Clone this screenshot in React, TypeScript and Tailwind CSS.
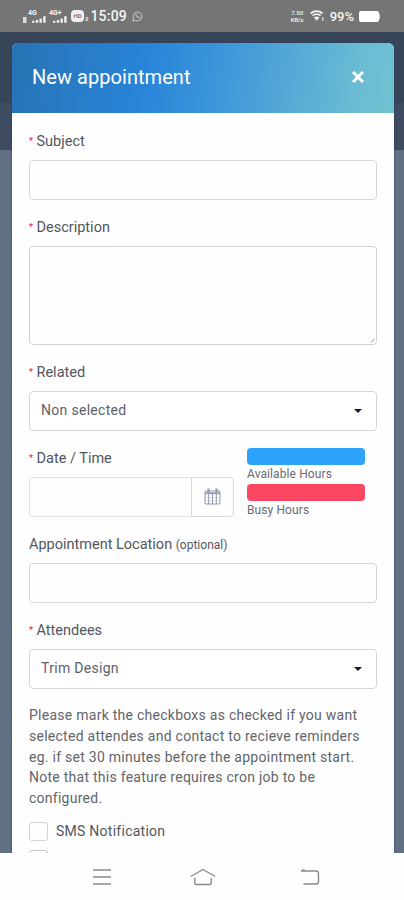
import React from 'react';

type LabelProps = {
  children: React.ReactNode;
  required?: boolean;
};

const Label: React.FC<LabelProps> = ({ children, required = true }) => (
  <div className="flex h-[19px] items-center text-[14.5px] leading-[19px] text-[#52565d]">
    {required && <span className="w-[7.5px] text-[9px] font-medium text-[#f0284a]">*</span>}
    <span>{children}</span>
  </div>
);

const SelectBox: React.FC<{ value: string }> = ({ value }) => (
  <button
    type="button"
    className="flex h-10 w-full items-center justify-between rounded border border-[#d3d7da] bg-white pr-3.5 pb-px pl-[11px] text-[14px] text-[#5b616a]"
  >
    <span className="tracking-[0.3px]">{value}</span>
    <span className="h-0 w-0 border-x-[4.5px] border-t-[4.5px] border-x-transparent border-t-[#10193a]" />
  </button>
);

const SignalBars = () => (
  <svg width="14" height="7" viewBox="0 0 15 7" fill="#eee">
    <rect x="0" y="5" width="2.6" height="2" />
    <rect x="4" y="4" width="2.6" height="3" />
    <rect x="8" y="2.5" width="2.6" height="4.5" />
    <rect x="12" y="0" width="2.6" height="7" />
  </svg>
);

const Signal: React.FC<{ network: string; className: string }> = ({ network, className }) => (
  <div className={`relative h-[13px] w-[18px] ${className}`}>
    <span className="absolute top-0 left-0 text-[7px] leading-[7px] font-bold">{network}</span>
    <span className="absolute right-0 bottom-0">
      <SignalBars />
    </span>
  </div>
);

const StatusBar = () => (
  <header className="flex h-8 items-center justify-between bg-[#757575] pr-6 pl-[22px] text-[#f4f4f4]">
    <div className="flex items-center">
      <svg width="5" height="7" viewBox="0 0 5 7" className="mt-1.5">
        <rect x="1" y="1" width="3.5" height="6" fill="#ddd" />
      </svg>
      <Signal network="4G" className="ml-px" />
      <Signal network="4G+" className="ml-[3px]" />
      <div className="ml-[4px] flex h-3 w-[13px] items-center justify-center rounded-[4px] bg-[#f0f0f0] text-[6px] leading-none font-bold text-[#777]">
        HD
      </div>
      <span className="mt-1.5 ml-px text-[6px] leading-none font-bold">2</span>
      <span className="ml-0.5 text-[14px] leading-none font-medium tracking-[0.2px]">15:09</span>
      <svg width="11" height="11" viewBox="0 0 12 12" fill="none" stroke="#d2d2d2" className="ml-[5px]">
        <path d="M1 11l.8-2.700A4.800 4.800 0 1 1 3.700 10.200z" strokeWidth="1" />
        <path d="M4 3.800c0 2.200 1.900 4.200 4.100 4.200l.6-1-1.400-.7-.6.6C5.900 6.500 5.500 6 5.200 5.300l.5-.6-.6-1.300z" strokeWidth=".7" />
      </svg>
    </div>
    <div className="flex items-center">
      <div className="w-[15px] text-center text-[6px] leading-[7px] font-medium">
        <div className="h-[7px]">7.50</div>
        <div className="h-[7px]">KB/s</div>
      </div>
      <svg width="15" height="12" viewBox="0 0 15 12" className="ml-[5px]" fill="none" stroke="#f3f3f3">
        <path d="M.7 3.500C4.300.6 9 .6 12.500 3.500" strokeWidth="2" />
        <path d="M2.600 5.700c2.500-2 5.500-2 8 0" strokeWidth="1.700" />
        <path d="M3.800 7.400c1.800-1.300 3.800-1.300 5.600 0l-2.800 3.300z" fill="#f3f3f3" stroke="none" />
        <path d="M12.800 7v4" strokeWidth="1" />
      </svg>
      <span className="ml-[5px] text-[13px] leading-none font-medium">99%</span>
      <div className="ml-[5px] h-[11px] w-5 rounded-[2px] bg-white" />
      <div className="h-[5px] w-px bg-[#ddd]" />
    </div>
  </header>
);

const CalendarIcon = () => (
  <svg width="17" height="18" viewBox="0 0 17 18" fill="none" stroke="#9299ae">
    <rect x="1" y="3" width="15" height="13" rx="1.200" />
    <path d="M1 5.200h15" strokeWidth="1.800" />
    <path d="M4.700 6v10M8.500 6v10M12.300 6v10" />
    <path d="M1 9.500h15M1 12.800h15" strokeWidth=".3" />
    <path d="M4.500.5v4M12.500.5v4" strokeWidth="2.200" />
  </svg>
);

const legend = [
  { label: 'Available Hours', color: 'bg-[#2ea3fb]' },
  { label: 'Busy Hours', color: 'bg-[#fc4662]' },
];

const AppointmentForm = () => (
  <form className="flex flex-col px-[17px] pt-[19px]">
    <Label>Subject</Label>
    <input className="mt-[9px] h-10 w-full rounded border border-[#d3d7da]" />

    <div className="mt-[18px]">
      <Label>Description</Label>
    </div>
    <div className="relative mt-[9px]">
      <textarea className="block h-[99px] w-full resize-none rounded border border-[#cfd3d5]" />
      <svg width="5" height="5" viewBox="0 0 5 5" stroke="#777" className="absolute right-0.5 bottom-0.5">
        <path d="M1 4.500L4.500 1" strokeWidth=".8" />
      </svg>
    </div>

    <div className="mt-[18px]">
      <Label>Related</Label>
    </div>
    <div className="mt-[9px]">
      <SelectBox value="Non selected" />
    </div>

    <div className="mt-[18px] flex justify-between">
      <div className="w-[205px]">
        <Label>Date / Time</Label>
        <div className="mt-[9px] flex h-10">
          <input className="min-w-0 flex-1 rounded-l border border-r-0 border-[#dfe3e5]" />
          <div className="flex w-[43px] items-center justify-center rounded-r border border-[#d5dadd]">
            <CalendarIcon />
          </div>
        </div>
      </div>
      <div className="-mt-0.5 w-[130px] pt-px">
        {legend.map((item) => (
          <div key={item.label} className="h-[35.5px]">
            <div className={`h-[17px] w-[118px] rounded ${item.color}`} />
            <div className="h-[18.5px] text-[12px] leading-[19px] tracking-[0.1px] text-[#686c73]">
              {item.label}
            </div>
          </div>
        ))}
      </div>
    </div>

    <div className="mt-4">
      <Label required={false}>
        Appointment Location <small className="text-[12px]">(optional)</small>
      </Label>
    </div>
    <input className="mt-[9px] h-10 w-full rounded border border-[#d3d7da]" />

    <div className="mt-[18px]">
      <Label>Attendees</Label>
    </div>
    <div className="mt-[9px]">
      <SelectBox value="Trim Design" />
    </div>

    <p className="mt-4 text-[14px] leading-[20.8px] tracking-[0.26px] whitespace-nowrap text-[#62656a]">
      Please mark the checkboxs as checked if you want
      <br />
      selected attendes and contact to recieve reminders
      <br />
      eg. if set 30 minutes before the appointment start.
      <br />
      Note that this feature requires cron job to be
      <br />
      configured.
    </p>

    <label className="mt-[13px] flex h-[19px] items-center text-[14px] tracking-[0.26px] text-[#53575d]">
      <span className="mr-2 h-[19px] w-[19px] rounded-[3px] border border-[#d0d6d8]" />
      SMS Notification
    </label>
    <span className="mt-[9px] h-[19px] w-[19px] shrink-0 rounded-[3px] border border-[#c3c8ca]" />
  </form>
);

const NavBar = () => (
  <nav className="flex h-[47px] items-center bg-[#fefefe] pl-[92px] text-[#8b8b8b]">
    <svg width="20" height="18" viewBox="0 0 20 18" fill="none" stroke="currentColor" strokeWidth="1.400">
      <path d="M1 2h18M1 9h18M1 16h18" />
    </svg>
    <svg
      width="26"
      height="18"
      viewBox="0 0 26 18"
      fill="none"
      stroke="currentColor"
      strokeWidth="1.400"
      strokeLinejoin="round"
      className="ml-[78px]"
    >
      <path d="M.7 8.500L13 1.500l12.300 7" />
      <path d="M4.800 9.800v5.200q0 1.500 1.500 1.500h13.400q1.500 0 1.500-1.500V9.800" />
    </svg>
    <svg
      width="20"
      height="18"
      viewBox="0 0 20 18"
      fill="none"
      stroke="currentColor"
      strokeWidth="1.400"
      className="ml-[84px]"
    >
      <path d="M1 3h15q2.500 0 2.500 2.500v8q0 2.500-2.500 2.500H3.500" />
      <path d="M.5 3L4.500.5V3z" fill="currentColor" stroke="none" />
    </svg>
  </nav>
);

export default function App() {
  return (
    <div className="flex h-[900px] w-[404px] flex-col overflow-hidden bg-white font-[Roboto,sans-serif]">
      <StatusBar />
      <main className="min-h-0 flex-1 overflow-hidden bg-[linear-gradient(#374559_0px,#374559_71px,#3e4b60_71px,#3e4b60_118px,#617083_118px)] pt-[11px] pr-2.5 pl-3">
        <section className="h-full overflow-hidden rounded-t-[6px] bg-[#fefefe] shadow-[0_0_2px_#263b66]">
          <div className="flex h-[70px] items-center justify-between bg-[linear-gradient(100deg,#2773b4_0%,#2985d9_36%,#429ad9_58%,#6bbcd3_90%,#70c2d1_100%)] pr-[30px] pb-0.5 pl-5 text-white">
            <h1 className="text-[20px] leading-none tracking-[0.05px]">New appointment</h1>
            <svg width="12" height="12" viewBox="0 0 12 12" stroke="white" strokeWidth="3">
              <path d="M1 1l10 10M11 1L1 11" />
            </svg>
          </div>
          <AppointmentForm />
        </section>
      </main>
      <NavBar />
    </div>
  );
}
